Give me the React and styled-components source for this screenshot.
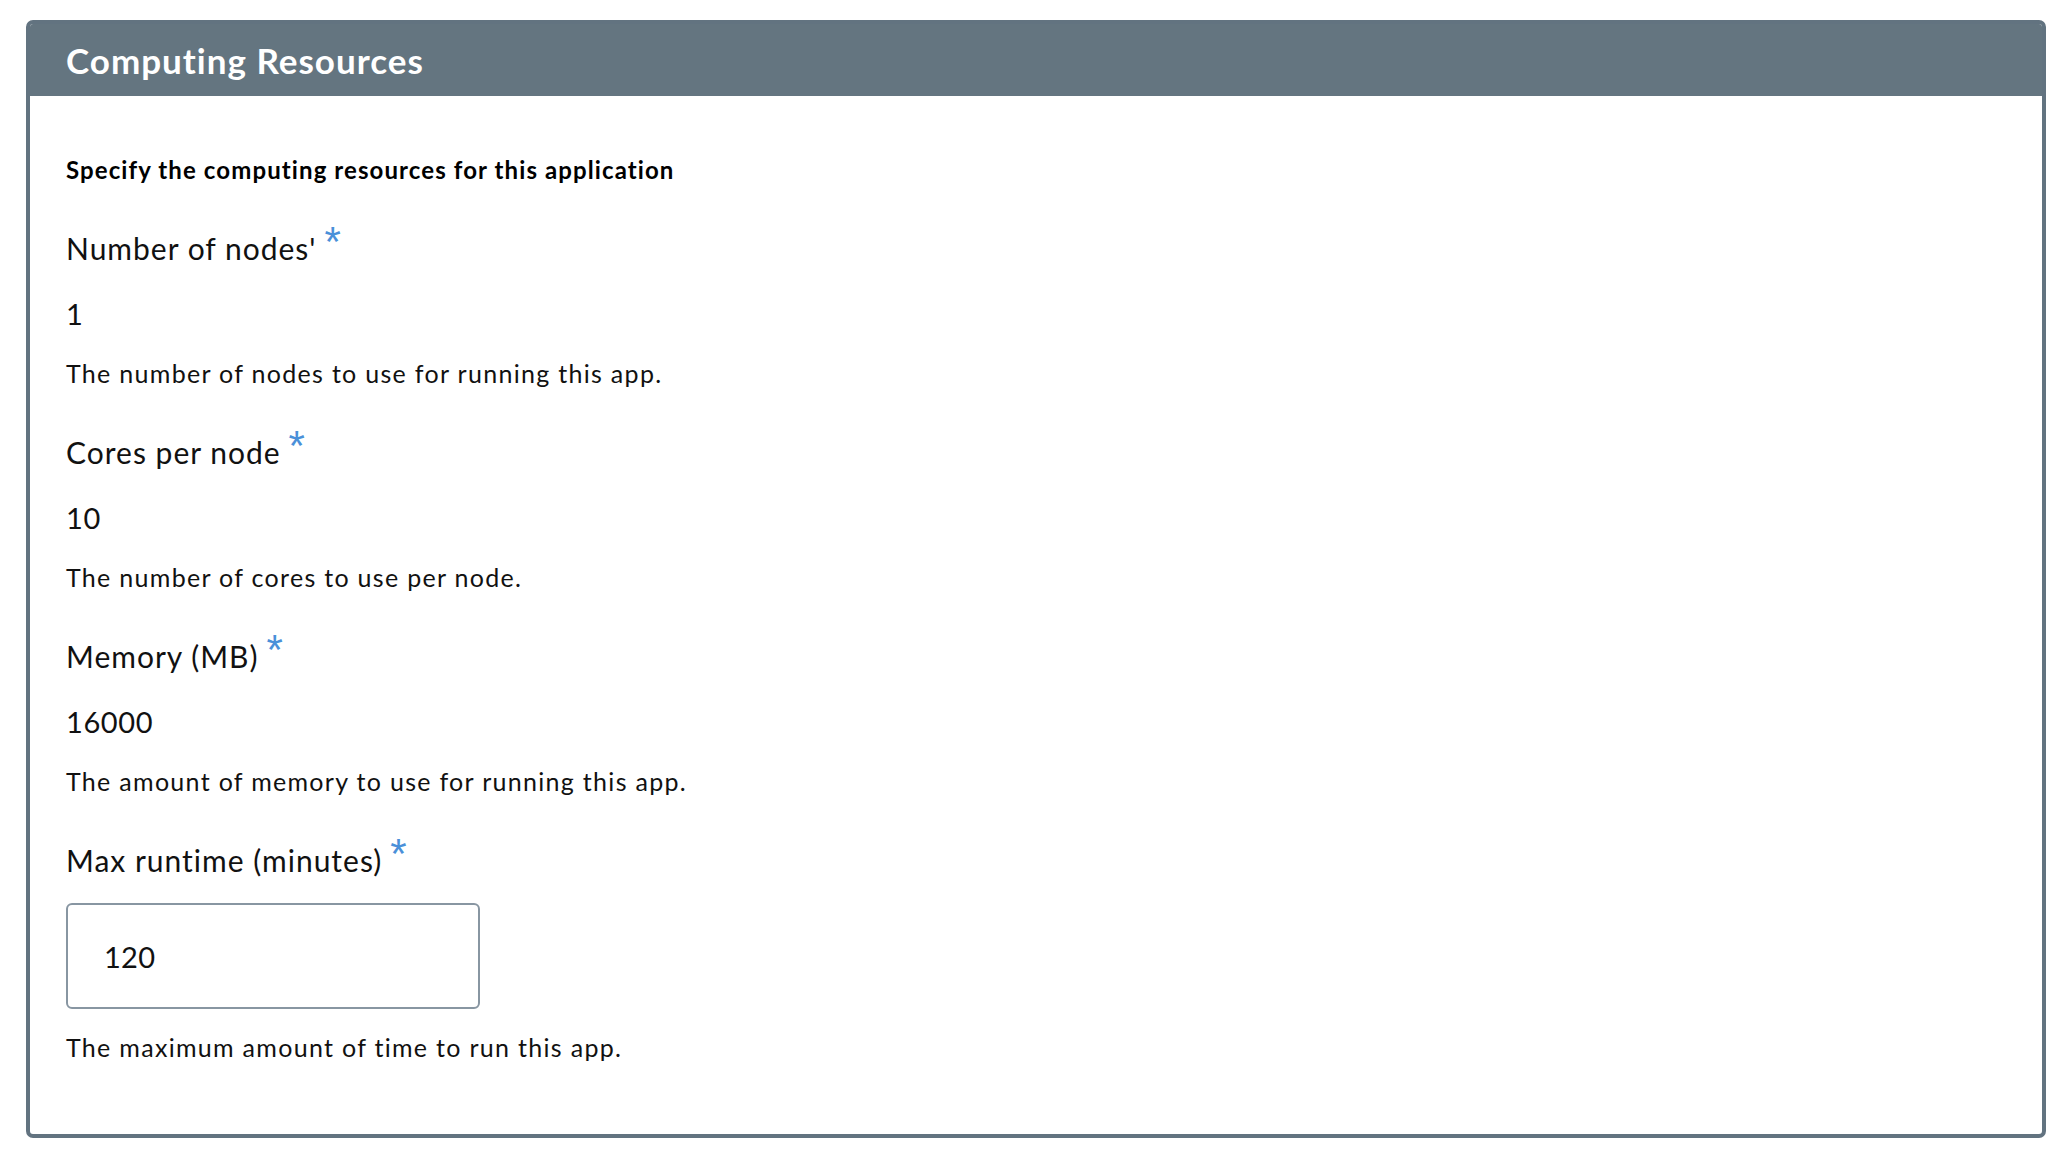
import React from 'react'
import styled, { createGlobalStyle } from 'styled-components'

const GlobalStyle = createGlobalStyle`
    html, body {
        margin: 0;
        padding: 0;
        background: #fff;
    }
    body {
        font-family: Lato, "Open Sans", sans-serif;
        color: #111;
    }
`

const Page = styled.div`
    padding: 20px 14px 21px 26px;
`

const Panel = styled.section`
    border: 4px solid #627380;
    border-radius: 7px;
    background: #fff;
    overflow: hidden;
`

const PanelHeader = styled.header`
    height: 72px;
    background: #647580;
    display: flex;
    align-items: center;
    padding: 0 36px;
`

const PanelTitle = styled.h2`
    margin: 0;
    font-size: 35px;
    font-weight: 700;
    color: #fff;
    letter-spacing: 1px;
`

const PanelBody = styled.div`
    padding: 59px 36px 72px;
    display: flex;
    flex-direction: column;
`

const Intro = styled.p`
    margin: 0;
    font-size: 24px;
    line-height: 30px;
    font-weight: 700;
    color: #000;
    letter-spacing: 1.1px;
`

const Field = styled.div`
    display: flex;
    flex-direction: column;
    margin-top: ${p => (p.$first ? '43px' : '44px')};
`

const Label = styled.label`
    font-size: 30px;
    line-height: 40px;
    color: #111;
    letter-spacing: 1px;
`

const Required = styled.span`
    margin-left: 8px;
    font-family: "Liberation Sans", Arial, sans-serif;
    font-size: 42px;
    line-height: 0;
    vertical-align: 4px;
    letter-spacing: 0;
    color: #4a90d9;
`

const Value = styled.div`
    margin-top: 26px;
    font-size: 29px;
    line-height: 40px;
    color: #111;
    letter-spacing: 0.6px;
`

const Input = styled.input`
    box-sizing: border-box;
    margin-top: 23px;
    width: 414px;
    height: 106px;
    padding: 0 36px;
    border: 2px solid #8896a2;
    border-radius: 6px;
    font-family: inherit;
    font-size: 29px;
    color: #111;
    letter-spacing: 0.3px;
    outline: none;
`

const Help = styled.p`
    margin: ${p => (p.$afterInput ? '23px' : '24px')} 0 0;
    font-size: 25px;
    line-height: 30px;
    color: #111;
    letter-spacing: 1.3px;
`

const fields = [
    { id: 'nodes', label: "Number of nodes'", value: '1', help: 'The number of nodes to use for running this app.' },
    { id: 'cores', label: 'Cores per node', value: '10', help: 'The number of cores to use per node.' },
    { id: 'memory', label: 'Memory (MB)', value: '16000', help: 'The amount of memory to use for running this app.' },
    { id: 'runtime', label: 'Max runtime (minutes)', value: '120', help: 'The maximum amount of time to run this app.', editable: true }
]

function App() {
    return (
        <>
            <GlobalStyle />
            <Page>
                <Panel>
                    <PanelHeader>
                        <PanelTitle>Computing Resources</PanelTitle>
                    </PanelHeader>
                    <PanelBody>
                        <Intro>Specify the computing resources for this application</Intro>
                        {fields.map((field, index) => (
                            <Field key={field.id} $first={index === 0}>
                                <Label htmlFor={field.id}>
                                    {field.label}
                                    <Required>*</Required>
                                </Label>
                                {field.editable ? (
                                    <Input id={field.id} type="text" defaultValue={field.value} />
                                ) : (
                                    <Value>{field.value}</Value>
                                )}
                                <Help $afterInput={field.editable}>{field.help}</Help>
                            </Field>
                        ))}
                    </PanelBody>
                </Panel>
            </Page>
        </>
    )
}

export default App
